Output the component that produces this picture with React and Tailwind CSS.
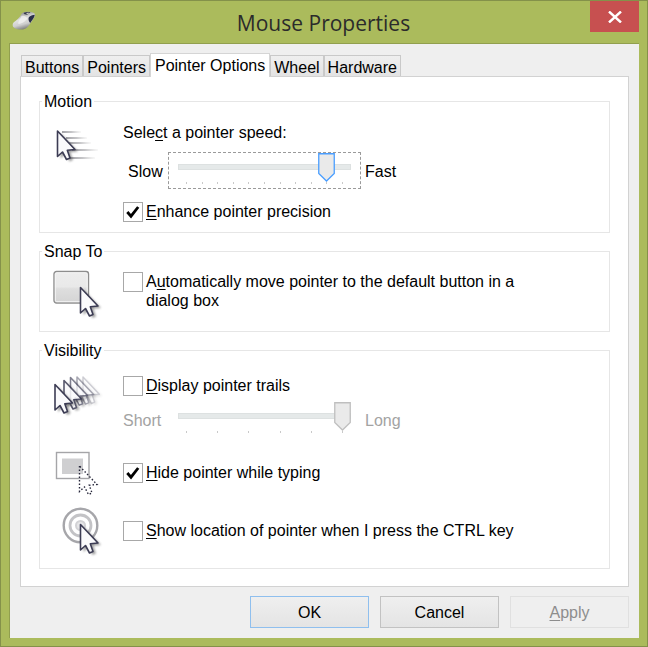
import { useState } from 'react';

const tabs = ['Buttons', 'Pointers', 'Pointer Options', 'Wheel', 'Hardware'];

function Arrow({ x, y, opacity = 1, scale = 1 }) {
  const d = 'M0 0V25.5L5 21L9 28.5L12.5 27L9.8 19.2L17.5 18.5Z';
  return (
    <g transform={`translate(${x} ${y}) scale(${scale})`} opacity={opacity}>
      <path d={d} transform="translate(3 2)" fill="#444" opacity="0.5" filter="url(#soft)" />
      <path d={d} fill="#fafafc" stroke="#3c3c54" strokeWidth="1.6" strokeLinejoin="round" />
    </g>
  );
}

function Icon({ children }) {
  return (
    <svg className="ml-[14px] mr-[21px] h-12 w-12 shrink-0 overflow-visible" viewBox="0 0 48 48" aria-hidden="true">
      <defs>
        <filter id="soft" x="-50%" y="-50%" width="200%" height="200%">
          <feGaussianBlur stdDeviation="1.3" />
        </filter>
        <linearGradient id="streak">
          <stop offset="0" stopColor="#8a8a90" stopOpacity="0.8" />
          <stop offset="0.5" stopColor="#a0a0a4" stopOpacity="0.6" />
          <stop offset="1" stopColor="#bbb" stopOpacity="0.1" />
        </linearGradient>
        <linearGradient id="face" x1="0" y1="0" x2="0" y2="1">
          <stop offset="0" stopColor="#ededed" />
          <stop offset="0.48" stopColor="#e9e9e9" />
          <stop offset="0.55" stopColor="#dedede" />
          <stop offset="1" stopColor="#d4d4d4" />
        </linearGradient>
      </defs>
      {children}
    </svg>
  );
}

function MouseIcon() {
  return (
    <svg className="h-5 w-6" viewBox="0 0 24 20" aria-hidden="true">
      <defs>
        <linearGradient id="body" x1="0.3" y1="0.1" x2="0.6" y2="1">
          <stop offset="0" stopColor="#9a9a9a" />
          <stop offset="0.35" stopColor="#e2e2e2" />
          <stop offset="0.65" stopColor="#cfcfcf" />
          <stop offset="1" stopColor="#6e6e6e" />
        </linearGradient>
      </defs>
      <path d="M10 2.2C14 0.2 20 0.6 22.6 2.4C24 5 21 8 18.5 12C16 16 14 18.3 9.5 18.6C4.5 18.8 0.3 17 0.7 13.5C1 10.5 5.5 9.5 8 5.5Z" fill="url(#body)" />
      <path d="M16.8 6.2C18.3 4.6 20.5 4 22.8 3.8C22.6 6.5 20.3 9 18.2 12C16.8 10.3 16 8 16.8 6.2Z" fill="#2b2f4a" />
      <path d="M11.5 2C13.5 1 16.5 0.7 18.5 1L16.8 2.2L15.2 3.8L12.6 3.2Z" fill="#33374a" />
      <path d="M14 2.6L16 1.5L17.4 2L15.4 3.2Z" fill="#c8c8c8" />
      <path d="M9.5 5C12 4.2 14 5 15.2 7.5C14 10 10.5 12.5 6.5 13C5.5 11 8 8.5 9.5 5Z" fill="#f4f4f4" opacity="0.7" />
    </svg>
  );
}

function Check({ defaultChecked, children }) {
  return (
    <label className="flex items-start gap-[3px] leading-[19px]">
      <span className="relative h-5 w-5 shrink-0">
        <input
          type="checkbox"
          defaultChecked={defaultChecked}
          className="peer block h-5 w-5 appearance-none border border-[#a8a8a8] bg-white"
        />
        <svg className="pointer-events-none absolute inset-0 hidden h-5 w-5 peer-checked:block" viewBox="0 0 20 20">
          <path d="M4.3 10L8 14.2L15.2 5" fill="none" stroke="#000" strokeWidth="2.8" />
        </svg>
      </span>
      <span className="max-w-96">{children}</span>
    </label>
  );
}

function Slider({ label, low, high, max, initial, disabled }) {
  const [value, setValue] = useState(initial);
  const ticks = Array.from({ length: max + 1 }, (_, i) => i);
  return (
    <div className={`flex items-center ${disabled ? 'text-[#a3a3a3]' : ''}`}>
      <span className={`w-[45px] shrink-0 pt-[2px] ${disabled ? '' : 'pl-[5px]'}`}>{low}</span>
      <div className={`relative h-[37px] w-[193px] border px-[9px] pt-[11px] ${disabled ? 'border-transparent' : 'border-dashed border-[#9a9a9a]'}`}>
        <div className="h-[6px] border border-[#dde1e1] bg-[#e5e9e9]" />
        <div className="mx-2 mt-3 flex justify-between">
          {ticks.map((t) => (
            <i key={t} className="h-[2px] w-px bg-[#c9c9c9]" />
          ))}
        </div>
        <div className="pointer-events-none absolute inset-x-[9px] top-0 pr-[17px]">
          <div className="relative">
            <svg
              className="absolute top-0 h-[29px] w-[17px]"
              style={{ left: `${(value / max) * 100}%` }}
              viewBox="0 0 17 29"
            >
              <path d="M0.75 0.75H16.25V20.5L8.5 28L0.75 20.5Z" fill="#eaeaea" stroke={disabled ? '#bfbfbf' : '#4a9eff'} strokeWidth="1.3" />
            </svg>
          </div>
        </div>
        <input
          type="range"
          aria-label={label}
          min="0"
          max={max}
          value={value}
          disabled={disabled}
          onChange={(e) => setValue(Number(e.target.value))}
          className="absolute inset-0 h-full w-full opacity-0"
        />
      </div>
      <span className="pl-1 pt-[2px]">{high}</span>
    </div>
  );
}

function Group({ title, className, children }) {
  return (
    <fieldset className={`border border-[#e6e6e6] ${className}`}>
      <legend className="ml-[2px] h-[18px] px-[2px] leading-5">{title}</legend>
      {children}
    </fieldset>
  );
}

function Key({ children }) {
  return <u className="decoration-1 underline-offset-2">{children}</u>;
}

export default function App() {
  return (
    <div className="flex min-h-screen flex-col border border-[#84914a] bg-[#abbb5c] px-2 pb-2 font-['Liberation_Sans',Arial,sans-serif] text-base leading-5 text-black">
      <header className="flex h-[42px] items-start justify-between">
        <div className="flex w-12 pl-[3px] pt-[10px]">
          <MouseIcon />
        </div>
        <h1 className="pt-2 font-['Open_Sans','Segoe_UI',sans-serif] text-[21px] leading-7 text-[#2b2b2b]">Mouse Properties</h1>
        <button type="button" aria-label="Close" className="flex h-[31px] w-[49px] items-center justify-center bg-[#c75050]">
          <svg className="h-3 w-[14px]" viewBox="0 0 14 12">
            <path d="M1 0.5L13 11.5M13 0.5L1 11.5" stroke="#fff" strokeWidth="2.4" />
          </svg>
        </button>
      </header>

      <main className="grow border-l border-t border-[#919f4e] bg-[#efefef] px-[10px] pb-[10px] pt-[9px]">
        <div role="tablist" className="flex items-end pl-px">
          {tabs.map((tab) =>
            tab === 'Pointer Options' ? (
              <button key={tab} type="button" role="tab" aria-selected="true" className="relative z-10 -mb-px h-6 border border-b-0 border-[#d5d5d5] bg-white px-1">
                {tab}
              </button>
            ) : (
              <button key={tab} type="button" role="tab" aria-selected="false" className="h-[21px] border border-b-0 border-[#c9c9c9] bg-linear-to-b from-[#efefef] to-[#e3e3e3] px-[3px] pt-[2px]">
                {tab}
              </button>
            )
          )}
        </div>

        <section role="tabpanel" className="flex flex-col gap-[9px] border border-[#d2d2d2] bg-white px-[18px] pb-[17px] pt-[15px]">
          <Group title="Motion" className="pb-[10px] pt-3">
            <div className="flex">
              <Icon>
                {[[8, 9, 19], [12, 15, 21], [15, 20, 22], [18, 27, 26], [16, 35, 25]].map(([x, y, w]) => (
                  <rect key={y} x={x} y={y} width={w} height="2" fill="url(#streak)" />
                ))}
                <Arrow x={3.5} y={9} />
              </Icon>
              <div>
                <p className="pt-px">
                  Sele<Key>c</Key>t a pointer speed:
                </p>
                <div className="mb-[13px] mt-[9px]">
                  <Slider label="Pointer speed" low="Slow" high="Fast" max={10} initial={9} />
                </div>
                <Check defaultChecked>
                  <Key>E</Key>nhance pointer precision
                </Check>
              </div>
            </div>
          </Group>

          <Group title="Snap To" className="pb-[13px] pt-[10px]">
            <div className="flex">
              <Icon>
                <rect x="0" y="1.5" width="34.5" height="31.5" rx="2.5" fill="url(#face)" stroke="#8e8e8e" strokeWidth="1.4" />
                <rect x="1.3" y="2.8" width="31.9" height="28.9" rx="1.5" fill="none" stroke="#f6f6f6" />
                <Arrow x={26.5} y={17.5} />
              </Icon>
              <div className="pt-[2px]">
                <Check>
                  A<Key>u</Key>tomatically move pointer to the default button in a dialog box
                </Check>
              </div>
            </div>
          </Group>

          <Group title="Visibility" className="pb-[13px] pt-[13px]">
            <div className="flex">
              <Icon>
                <Arrow x={29} y={5} scale={0.93} opacity={0.25} />
                <Arrow x={23} y={5} scale={0.95} opacity={0.45} />
                <Arrow x={16.5} y={5.5} scale={0.97} opacity={0.65} />
                <Arrow x={10} y={8.5} opacity={0.85} />
                <Arrow x={1} y={12.5} />
              </Icon>
              <div className="pb-[11px] pt-1">
                <Check>
                  <Key>D</Key>isplay pointer trails
                </Check>
                <div className="mt-[5px]">
                  <Slider label="Pointer trail length" low="Short" high="Long" max={5} initial={5} disabled />
                </div>
              </div>
            </div>
            <div className="flex pb-[10px]">
              <Icon>
                <rect x="2.5" y="3.5" width="32.5" height="26" fill="#fff" stroke="#a5a5a8" strokeWidth="1.4" />
                <rect x="8" y="9.5" width="21" height="15.5" fill="#cfcfd1" />
                <path d="M25.5 17V42.5L30.5 38L34.5 45.5L38 44L35.3 36.2L43 35.5Z" fill="none" stroke="#26263a" strokeWidth="1.4" strokeDasharray="1.5 2" />
              </Icon>
              <div className="pt-[14px]">
                <Check defaultChecked>
                  <Key>H</Key>ide pointer while typing
                </Check>
              </div>
            </div>
            <div className="flex">
              <Icon>
                <circle cx="26.5" cy="18.5" r="16.8" fill="#fff" stroke="#a6a6aa" strokeWidth="2.4" />
                <circle cx="26.5" cy="18.5" r="10.5" fill="none" stroke="#c3c3c6" strokeWidth="2.8" />
                <circle cx="26.5" cy="18.5" r="4.5" fill="#e6e6e8" stroke="#d2d2d5" strokeWidth="2" />
                <Arrow x={26.5} y={17.5} />
              </Icon>
              <div className="pt-[14px]">
                <Check>
                  <Key>S</Key>how location of pointer when I press the CTRL key
                </Check>
              </div>
            </div>
          </Group>
        </section>

        <footer className="mt-[9px] flex justify-end gap-[11px]">
          <button type="button" className="h-8 w-[119px] border border-[#8fbfee] bg-linear-to-b from-[#efefef] to-[#e4e4e4] pt-[2px]">OK</button>
          <button type="button" className="h-8 w-[119px] border border-[#c2c2c2] bg-linear-to-b from-[#efefef] to-[#e4e4e4] pt-[2px]">Cancel</button>
          <button type="button" disabled className="h-8 w-[119px] border border-[#e0e0e0] bg-[#efefef] pt-[2px] text-[#8d8d8d]">
            <Key>A</Key>pply
          </button>
        </footer>
      </main>
    </div>
  );
}
